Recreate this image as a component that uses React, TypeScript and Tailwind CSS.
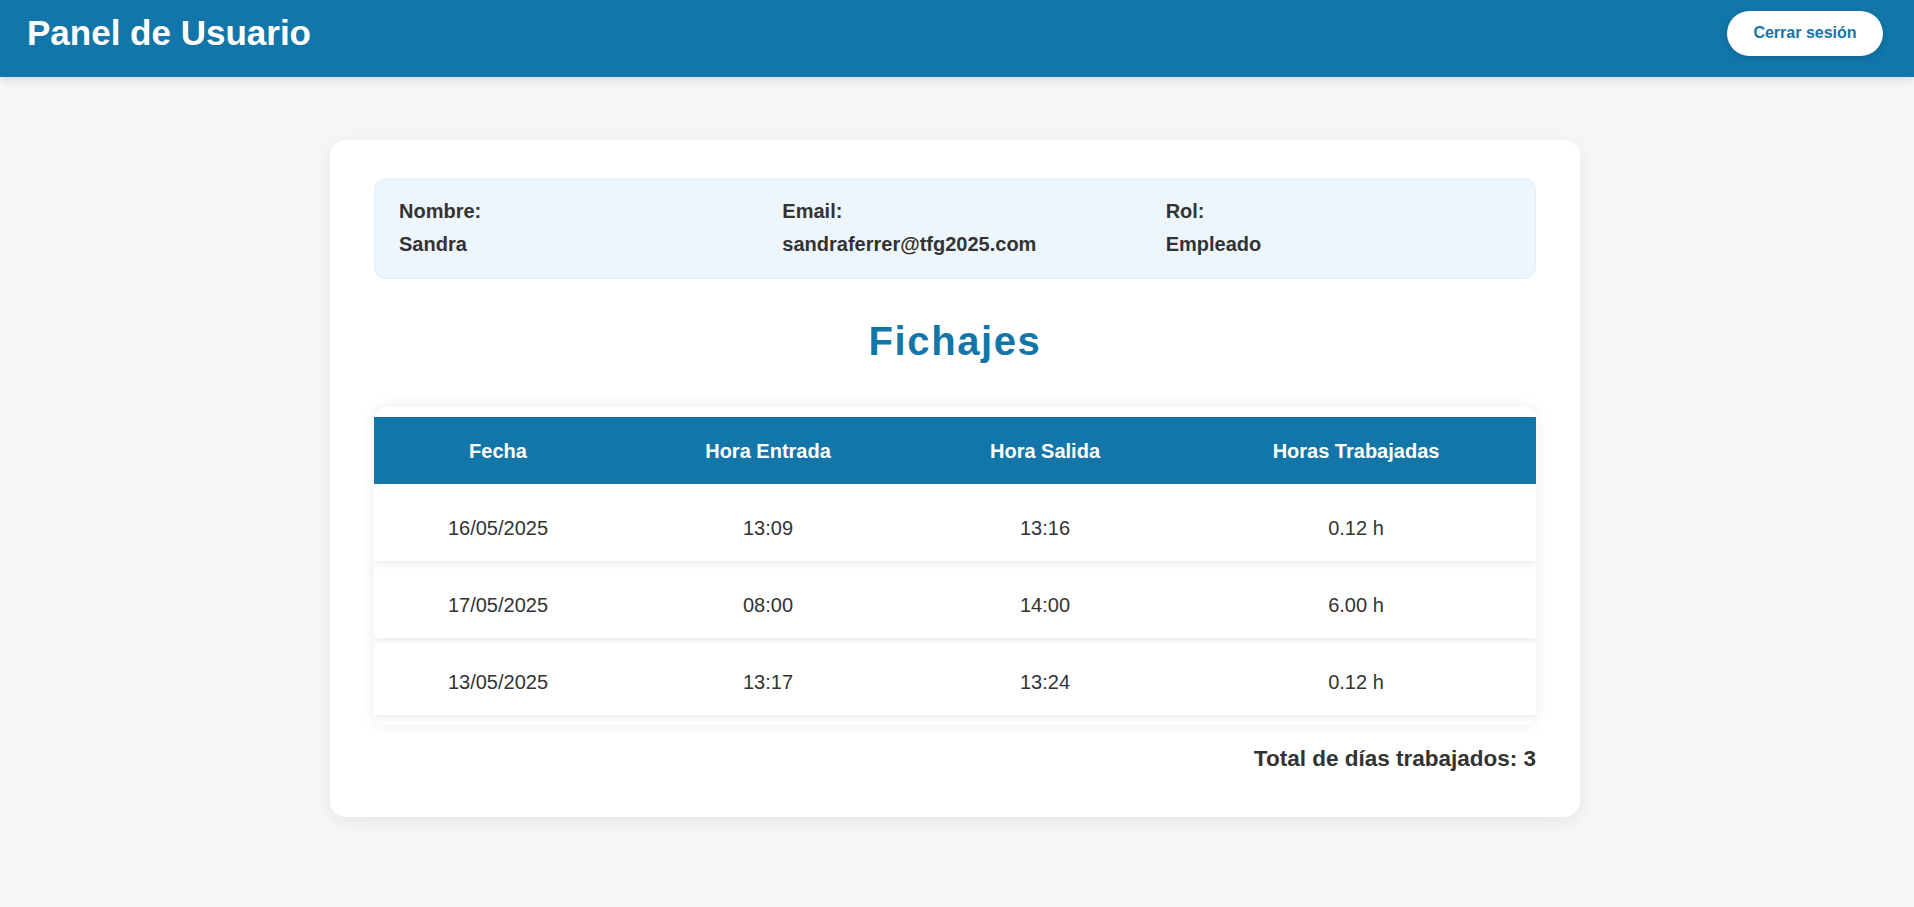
import React from 'react';

const fichajes = [
  { fecha: '16/05/2025', entrada: '13:09', salida: '13:16', horas: '0.12 h' },
  { fecha: '17/05/2025', entrada: '08:00', salida: '14:00', horas: '6.00 h' },
  { fecha: '13/05/2025', entrada: '13:17', salida: '13:24', horas: '0.12 h' },
];

const usuario = [
  { label: 'Nombre:', value: 'Sandra' },
  { label: 'Email:', value: 'sandraferrer@tfg2025.com' },
  { label: 'Rol:', value: 'Empleado' },
];

const App: React.FC = () => {
  return (
    <div className="min-h-screen bg-[#f7f7f7] font-['Liberation_Sans',Arial,sans-serif] text-[#333]">
      {/* Header */}
      <header className="h-[77px] bg-[#1276a9] flex items-center justify-between pl-[27px] pr-[31px] pb-[11px] shadow-[0_2px_10px_rgba(0,0,0,0.15)]">
        <h1 className="text-[35px] leading-[40px] font-bold text-white">Panel de Usuario</h1>
        <button className="h-[45px] w-[156px] rounded-full bg-white text-[#1276a9] text-[16px] font-bold shadow-[0_2px_6px_rgba(0,0,0,0.15)]">
          Cerrar sesión
        </button>
      </header>

      <main className="pt-[63px] pb-[60px] pr-[4px]">
        <div className="mx-auto w-[1250px] rounded-2xl bg-white px-[44px] pt-[38px] pb-[46px] shadow-[0_4px_20px_rgba(0,0,0,0.08)]">
          {/* Datos del usuario */}
          <div className="grid grid-cols-3 gap-x-[38px] rounded-xl border border-[#e3eef9] bg-[#eef6fd] px-[24px] pt-[20px] pb-[22px]">
            {usuario.map((item) => (
              <div key={item.label} className="text-[20px] leading-[24px] font-bold text-[#333]">
                <div>{item.label}</div>
                <div className="mt-[9px]">{item.value}</div>
              </div>
            ))}
          </div>

          <h2 className="mt-[39px] text-center text-[40px] leading-[46px] font-bold tracking-[1.6px] text-[#1276a9]">
            Fichajes
          </h2>

          {/* Tabla */}
          <div className="mt-[43px] flex flex-col gap-[10px] overflow-hidden rounded-xl bg-white py-[10px] shadow-[0_0_15px_rgba(0,0,0,0.08)]">
            <div className="grid h-[67px] grid-cols-[248px_292px_262px_1fr] items-center bg-[#1276a9] text-center text-[20px] font-bold text-white">
              <div>Fecha</div>
              <div>Hora Entrada</div>
              <div>Hora Salida</div>
              <div>Horas Trabajadas</div>
            </div>
            {fichajes.map((f, i) => (
              <div
                key={i}
                className="grid h-[67px] grid-cols-[248px_292px_262px_1fr] items-center bg-white text-center text-[20px] text-[#333] shadow-[0_3px_6px_rgba(0,0,0,0.08)]"
              >
                <div>{f.fecha}</div>
                <div>{f.entrada}</div>
                <div>{f.salida}</div>
                <div>{f.horas}</div>
              </div>
            ))}
          </div>

          <p className="mt-[21px] text-right text-[22.5px] leading-[25px] font-bold text-[#333]">
            Total de días trabajados: {fichajes.length}
          </p>
        </div>
      </main>
    </div>
  );
};

export default App;
